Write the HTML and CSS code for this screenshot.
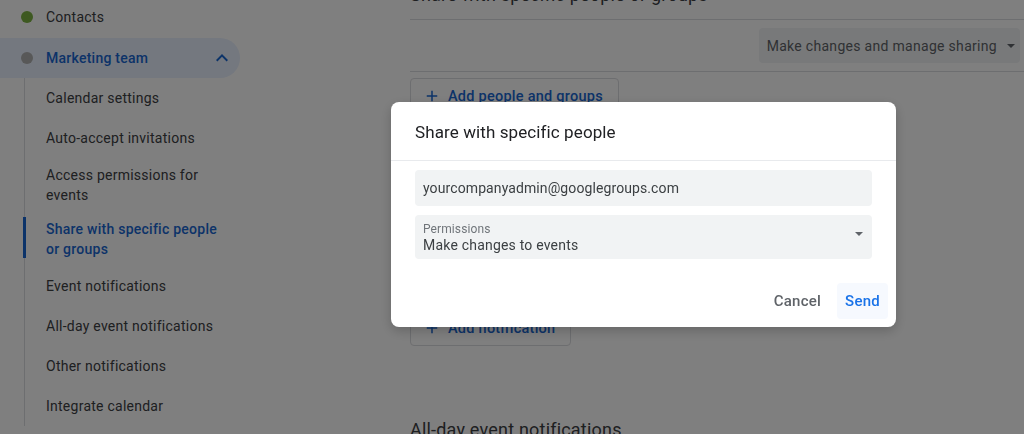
FILE: index.html
```html
<!DOCTYPE html>
<html>
<head>
  <title>Calendar settings</title>
  <link rel="stylesheet" href="styles.css">
</head>
<body>
  <div class="page">
    <nav class="sidebar">
      <div class="cal-row">
        <span class="dot dot-green"></span>
        <span class="cal-name">Contacts</span>
      </div>
      <div class="cal-row cal-row-open">
        <span class="dot dot-gray"></span>
        <span class="cal-name">Marketing team</span>
        <svg class="chevron" width="24" height="24" viewBox="0 0 24 24"><path d="M7.41 15.41 12 10.83l4.59 4.58L18 14l-6-6-6 6z"/></svg>
      </div>
      <ul class="sub-list">
        <li class="sub-item">Calendar settings</li>
        <li class="sub-item">Auto-accept invitations</li>
        <li class="sub-item sub-item-wrap">Access permissions for events</li>
        <li class="sub-item sub-item-wrap sub-item-active">Share with specific people or groups</li>
        <li class="sub-item">Event notifications</li>
        <li class="sub-item">All-day event notifications</li>
        <li class="sub-item">Other notifications</li>
        <li class="sub-item">Integrate calendar</li>
      </ul>
    </nav>

    <main class="main">
      <h2 class="section-title">Share with specific people or groups</h2>
      <div class="share-row">
        <div class="perm-select">
          <span>Make changes and manage sharing</span>
          <span class="caret"></span>
        </div>
      </div>
      <button class="outline-btn">
        <svg width="18" height="18" viewBox="0 0 24 24"><path d="M19 13h-6v6h-2v-6H5v-2h6V5h2v6h6v2z"/></svg>
        Add people and groups
      </button>

      <div class="spacer-block"></div>

      <button class="outline-btn">
        <svg width="18" height="18" viewBox="0 0 24 24"><path d="M19 13h-6v6h-2v-6H5v-2h6V5h2v6h6v2z"/></svg>
        Add notification
      </button>

      <h2 class="section-title section-title-next">All-day event notifications</h2>
    </main>
  </div>

  <div class="scrim">
    <div class="dialog">
      <div class="dialog-header">Share with specific people</div>
      <div class="dialog-body">
        <div class="field">yourcompanyadmin@googlegroups.com</div>
        <div class="field field-select">
          <div>
            <div class="field-label">Permissions</div>
            <div class="field-value">Make changes to events</div>
          </div>
          <span class="caret"></span>
        </div>
      </div>
      <div class="dialog-actions">
        <button class="text-btn">Cancel</button>
        <button class="text-btn text-btn-primary">Send</button>
      </div>
    </div>
  </div>
</body>
</html>
```

FILE: styles.css
```css
/* Settings page under a modal dialog */
body {
  margin: 0;
  font-family: Roboto, "Liberation Sans", Arial, sans-serif;
  background-color: #fff;
  color: #3c4043;
  overflow: hidden;
}

.page {
  display: flex;
  height: 434px;
}

/* Sidebar */
.sidebar {
  width: 240px;
  flex-shrink: 0;
  font-size: 14px;
  letter-spacing: 0.25px;
}

.cal-row {
  display: flex;
  align-items: center;
  height: 34px;
  padding-left: 21px;
}

.cal-row-open {
  height: 40px;
  margin-top: 4px;
  background-color: #e8f0fe;
  border-radius: 0 20px 20px 0;
  color: #1967d2;
  font-weight: 500;
}

.dot {
  width: 12px;
  height: 12px;
  border-radius: 50%;
  margin-right: 13px;
}

.dot-green {
  background-color: #7cb342;
}

.dot-gray {
  background-color: #b0b0b0;
}

.cal-name {
  flex: 1;
}

.chevron {
  fill: #1967d2;
  margin-right: 6px;
}

.sub-list {
  list-style: none;
  margin: 0 0 0 24px;
  padding: 0;
  border-left: 1px solid #dadce0;
}

.sub-item {
  position: relative;
  padding: 10px 20px 10px 21px;
  line-height: 20px;
}

.sub-item-wrap {
  padding-top: 7px;
  padding-bottom: 7px;
}

.sub-item-active {
  color: #1967d2;
  font-weight: 500;
}

.sub-item-active::before {
  content: "";
  position: absolute;
  left: -2px;
  top: 5px;
  bottom: 8px;
  width: 3px;
  background-color: #1967d2;
}

/* Main settings column */
.main {
  flex: 1;
  padding-left: 170px;
}

.section-title {
  margin: -17px 0 0;
  padding-bottom: 12px;
  font-size: 18px;
  font-weight: 400;
  line-height: 24px;
  letter-spacing: 0.2px;
  color: #3c4043;
  border-bottom: 1px solid #dadce0;
}

.section-title-next {
  margin-top: 72px;
  border-bottom: none;
}

.share-row {
  display: flex;
  justify-content: flex-end;
  padding: 8px 4px 8px 0;
  border-bottom: 1px solid #dadce0;
}

.perm-select {
  display: flex;
  align-items: center;
  gap: 10px;
  height: 35px;
  padding: 0 5px 0 8px;
  background-color: #f1f3f4;
  border-radius: 4px;
  font-size: 14px;
  letter-spacing: 0.3px;
  color: #5f6368;
}

.caret {
  width: 0;
  height: 0;
  border-left: 4px solid transparent;
  border-right: 4px solid transparent;
  border-top: 4px solid #5f6368;
}

.outline-btn {
  display: flex;
  align-items: center;
  gap: 7px;
  height: 36px;
  margin-top: 6px;
  padding: 0 15px 0 12px;
  background: #fff;
  border: 1px solid #dadce0;
  border-radius: 4px;
  font-family: inherit;
  font-size: 14.5px;
  font-weight: 500;
  letter-spacing: 0.25px;
  color: #1967d2;
}

.outline-btn svg {
  fill: #1967d2;
}

.spacer-block {
  height: 190px;
}

/* Modal */
.scrim {
  position: fixed;
  inset: 0;
  background-color: rgba(0, 0, 0, 0.5);
}

.dialog {
  position: absolute;
  left: 391px;
  top: 102px;
  width: 505px;
  background-color: #fff;
  border-radius: 8px;
  box-shadow: 0 4px 12px rgba(0, 0, 0, 0.2);
}

.dialog-header {
  padding: 18px 24px 16px;
  font-size: 17px;
  line-height: 24px;
  letter-spacing: 0.1px;
  color: #202124;
  border-bottom: 1px solid #e8eaed;
}

.dialog-body {
  display: flex;
  flex-direction: column;
  gap: 9px;
  padding: 9px 24px 0;
  letter-spacing: 0.1px;
}

.field {
  display: flex;
  align-items: center;
  height: 36px;
  padding: 0 8px;
  background-color: #f1f3f4;
  border-radius: 4px;
  font-size: 14px;
  color: #3c4043;
}

.field-select {
  height: 44px;
  justify-content: space-between;
  padding-right: 9px;
}

.field-label {
  font-size: 12px;
  line-height: 16px;
  color: #70757a;
}

.field-value {
  font-size: 14px;
  line-height: 17px;
  letter-spacing: 0.2px;
  color: #3c4043;
}

.field-select .caret {
  margin-top: -6px;
}

.dialog-actions {
  display: flex;
  justify-content: flex-end;
  gap: 8px;
  padding: 24px 8px 8px;
}

.text-btn {
  height: 36px;
  padding: 0 8px;
  background: none;
  border: none;
  border-radius: 4px;
  font-family: inherit;
  font-size: 15px;
  font-weight: 500;
  letter-spacing: 0.25px;
  color: #5f6368;
}

.text-btn-primary {
  color: #1a73e8;
  background-color: #f6f9fe;
}
```
